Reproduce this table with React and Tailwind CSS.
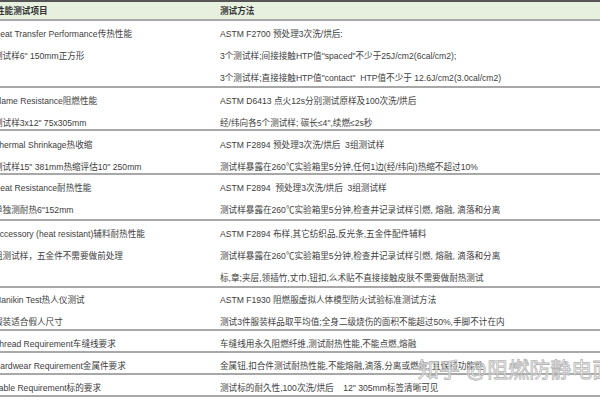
export default function App() {
  const rows = [
    {
      box: "h-[67px] pt-[2px]",
      left: ["Heat Transfer Performance传热性能", "测试样6\" 150mm正方形", ""],
      right: [
        "ASTM F2700 预处理3次洗/烘后:",
        "3个测试样;间接接触HTP值\"spaced\"不少于25J/cm2(6cal/cm2);",
        "3个测试样;直接接触HTP值\"contact\"  HTP值不少于 12.6J/cm2(3.0cal/cm2)",
      ],
    },
    {
      box: "h-[43px] pt-[2px]",
      left: ["Flame Resistance阻燃性能", "测试样3x12\" 75x305mm"],
      right: ["ASTM D6413 点火12s分别测试原样及100次洗/烘后", "经/纬向各5个测试样; 碳长≤4\",续燃≤2s秒"],
    },
    {
      box: "h-[44px] pt-[3px]",
      left: ["Thermal Shrinkage热收缩", "测试样15\" 381mm热缩评估10\" 250mm"],
      right: [
        "ASTM F2894 预处理3次洗/烘后  3组测试样",
        "测试样暴露在260℃实验箱里5分钟,任何1边(经/纬向)热缩不超过10%",
      ],
    },
    {
      box: "h-[46px] pt-[2px]",
      left: ["Heat Resistance耐热性能", "单独测耐热6\"152mm"],
      right: [
        "ASTM F2894  预处理3次洗/烘后  3组测试样",
        "测试样暴露在260℃实验箱里5分钟,检查并记录试样引燃, 熔融, 滴落和分离",
      ],
    },
    {
      box: "h-[67px] pt-[2px]",
      left: ["Accessory (heat resistant)辅料耐热性能", "组测试样，五金件不需要做前处理", ""],
      right: [
        "ASTM F2894 布样,其它纺织品,反光条,五金件配件辅料",
        "测试样暴露在260℃实验箱里5分钟,检查并记录试样引燃, 熔融, 滴落和分离",
        "标,章;夹层,领插竹,丈巾,钮扣,么术贴不直接接触皮肤不需要做耐热测试",
      ],
    },
    {
      box: "h-[43px] pt-[1px]",
      left: ["Manikin Test热人仪测试", "服装适合假人尺寸"],
      right: [
        "ASTM F1930 阻燃服虚拟人体模型防火试验标准测试方法",
        "测试3件服装样品取平均值;全身二级烧伤的面积不能超过50%,手脚不计在内",
      ],
    },
    {
      box: "h-[22px] pt-[2px]",
      left: ["Thread Requirement车缝线要求"],
      right: ["车缝线用永久阻燃纤维,测试耐热性能,不能点燃,熔融"],
    },
    {
      box: "h-[22px] pt-[2px]",
      left: ["Hardwear Requirement金属件要求"],
      right: ["金属钮,扣合件测试耐热性能,不能熔融,滴落,分离或燃烧, 且保持功能性"],
    },
    {
      box: "h-[22px] pt-[2px]",
      left: ["Lable Requirement标的要求"],
      right: ["测试标的耐久性,100次洗/烘后    12\" 305mm标签清晰可见"],
    },
  ];

  return (
    <div
      className="relative w-[600px] h-[400px] overflow-hidden bg-white text-[8.6px] text-[#404040]"
      style={{ fontFamily: '"Liberation Sans", "Noto Sans CJK SC", sans-serif' }}
    >
      <div className="ml-[-6px] w-[606px]">
        <div className="flex h-[21px] pt-[1px] border-t-2 border-b-2 border-t-[#555] border-b-[#a8a8a8] bg-[#e7efdf] font-bold text-[#333] leading-[17px]">
          <div className="w-[226px] pl-[2px] whitespace-nowrap">性能测试项目</div>
          <div className="flex-1 whitespace-nowrap">测试方法</div>
        </div>
        {rows.map((row, i) => (
          <div key={i} className={"flex items-start border-b-2 border-[#a8a8a8] leading-[22px] " + row.box}>
            <div className="w-[226px] whitespace-nowrap">
              {row.left.map((t, j) => (
                <div key={j}>{t || "\u00a0"}</div>
              ))}
            </div>
            <div className="flex-1 whitespace-pre">
              {row.right.map((t, j) => (
                <div key={j}>{t}</div>
              ))}
            </div>
          </div>
        ))}
      </div>
      <div className="absolute left-[418px] top-[358px] whitespace-nowrap text-[21px] leading-[24px] text-white/70 [-webkit-text-stroke:0.8px_#b5b5b5]">
        知乎 @阻燃防静电面
      </div>
    </div>
  );
}
